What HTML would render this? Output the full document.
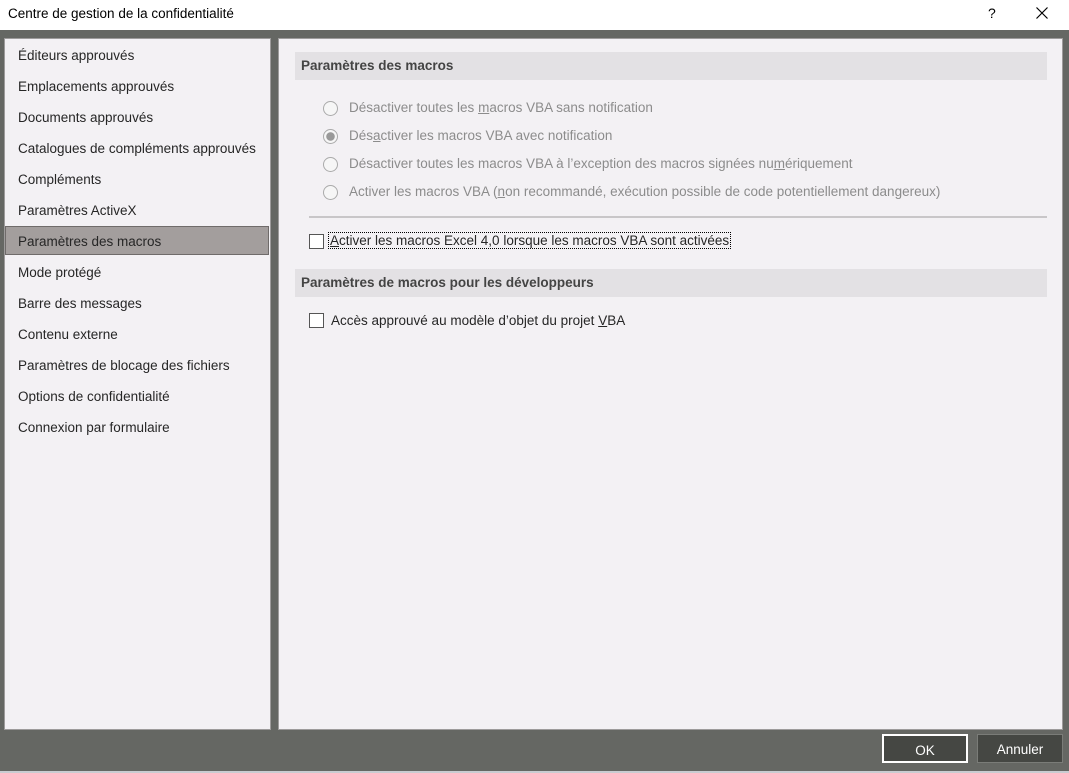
<!DOCTYPE html>
<html><head><meta charset="utf-8"><style>
body{margin:0;width:1069px;height:773px;background:#656763;position:relative;overflow:hidden;font-family:"Liberation Sans",sans-serif;font-size:13.5px;color:#262626}
.a{position:absolute}
#title{left:0;top:0;width:1069px;height:30px;background:#fff}
#lp{left:4px;top:38px;width:265px;height:690px;background:#f3f1f4;border:1px solid #9d9b9b}
#rp{left:278px;top:38px;width:783px;height:690px;background:#f3f1f4;border:1px solid #9d9b9b}
.li{position:absolute;left:13px;white-space:nowrap}
.sel{position:absolute;left:0;top:187px;width:264px;height:29px;background:#a39e9d;border:1px solid #6f6b6a;box-sizing:border-box}
.hd{position:absolute;left:16px;width:752px;height:28px;background:#e3e1e4;font-weight:bold;color:#444;line-height:28px;text-indent:6px;font-size:13.5px}
.r{position:absolute;left:48px;color:#8c8c8c;white-space:nowrap}
.r i{position:absolute;left:-4px;top:1px;width:13px;height:13px;border:1px solid #aaa;border-radius:50%;background:#f6f6f6}
.r span{position:absolute;left:22px;top:0}
.cb{position:absolute;left:30px;width:13px;height:13px;border:1px solid #555;background:#fff}
.ct{position:absolute;left:52px;white-space:nowrap}
.btn{position:absolute;top:734px;height:29px;background:#454743;color:#fff;text-align:center;line-height:29px;box-sizing:border-box}
</style></head><body>
<div class="a" id="title"><div class="a" style="left:8px;top:6px;font-size:13.5px;color:#000">Centre de gestion de la confidentialité</div>
<div class="a" style="left:988px;top:5px;font-size:14px;color:#000">?</div>
<svg class="a" style="left:1036px;top:7px" width="12" height="12"><path d="M0.5 0.5L11.5 11.5M11.5 0.5L0.5 11.5" stroke="#000" stroke-width="1.2"/></svg></div>
<div class="a" id="lp">
<div class="sel"></div>
<div class="li" style="top:9px">Éditeurs approuvés</div>
<div class="li" style="top:40px">Emplacements approuvés</div>
<div class="li" style="top:71px">Documents approuvés</div>
<div class="li" style="top:102px">Catalogues de compléments approuvés</div>
<div class="li" style="top:133px">Compléments</div>
<div class="li" style="top:164px">Paramètres ActiveX</div>
<div class="li" style="top:195px">Paramètres des macros</div>
<div class="li" style="top:226px">Mode protégé</div>
<div class="li" style="top:257px">Barre des messages</div>
<div class="li" style="top:288px">Contenu externe</div>
<div class="li" style="top:319px">Paramètres de blocage des fichiers</div>
<div class="li" style="top:350px">Options de confidentialité</div>
<div class="li" style="top:381px">Connexion par formulaire</div>
</div>
<div class="a" id="rp">
<div class="hd" style="top:13px">Paramètres des macros</div>
<div class="r" style="top:61px"><i></i><span>Désactiver toutes les <u>m</u>acros VBA sans notification</span></div>
<div class="r" style="top:89px"><i style="background:radial-gradient(circle,#999 0 4px,#f6f6f6 4.5px)"></i><span>Dés<u>a</u>ctiver les macros VBA avec notification</span></div>
<div class="r" style="top:117px"><i></i><span>Désactiver toutes les macros VBA à l’exception des macros signées nu<u>m</u>ériquement</span></div>
<div class="r" style="top:145px"><i></i><span>Activer les macros VBA (<u>n</u>on recommandé, exécution possible de code potentiellement dangereux)</span></div>
<div class="a" style="left:30px;top:177px;width:738px;height:2px;background:#c8c6c8"></div>
<div class="cb" style="top:195px"></div>
<div class="ct" style="top:194px;outline:1px dotted #000;padding:0 1px;left:50px"><u>A</u>ctiver les macros Excel 4,0 lorsque les macros VBA sont activées</div>
<div class="hd" style="top:230px">Paramètres de macros pour les développeurs</div>
<div class="cb" style="top:274px"></div>
<div class="ct" style="top:274px">Accès approuvé au modèle d’objet du projet <u>V</u>BA</div>
</div>
<div class="btn" style="left:882px;width:86px;border:2px solid #fff">OK</div>
<div class="btn" style="left:977px;width:86px;border:1px solid #7a7c78">Annuler</div>
<div class="a" style="left:0;top:771px;width:1069px;height:2px;background:#c9ccd1"></div>
</body></html>
